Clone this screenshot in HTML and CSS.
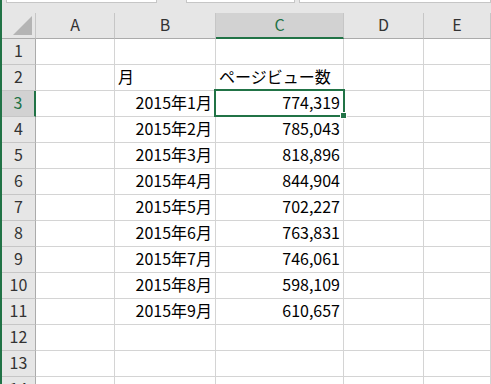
FILE: index.html
```html
<!DOCTYPE html>
<html>
<head>
  <title>Book1 - Excel</title>
  <link rel="stylesheet" href="styles.css">
</head>
<body>
  <div class="window">
    <div class="formula-strip">
      <div class="box name-box"></div>
      <div class="box func-box"></div>
      <div class="box formula-box"></div>
    </div>
    <div class="sheet">
      <div class="head corner"><span class="triangle"></span></div>
      <div class="head col">A</div>
      <div class="head col">B</div>
      <div class="head col active-col">C</div>
      <div class="head col">D</div>
      <div class="head col">E</div>

      <div class="head row">1</div>
      <div class="cell"></div><div class="cell"></div><div class="cell"></div><div class="cell"></div><div class="cell"></div>

      <div class="head row">2</div>
      <div class="cell"></div><div class="cell">月</div><div class="cell">ページビュー数</div><div class="cell"></div><div class="cell"></div>

      <div class="head row active-row">3</div>
      <div class="cell"></div><div class="cell num">2015年1月</div><div class="cell num selected">774,319</div><div class="cell"></div><div class="cell"></div>

      <div class="head row">4</div>
      <div class="cell"></div><div class="cell num">2015年2月</div><div class="cell num">785,043</div><div class="cell"></div><div class="cell"></div>

      <div class="head row">5</div>
      <div class="cell"></div><div class="cell num">2015年3月</div><div class="cell num">818,896</div><div class="cell"></div><div class="cell"></div>

      <div class="head row">6</div>
      <div class="cell"></div><div class="cell num">2015年4月</div><div class="cell num">844,904</div><div class="cell"></div><div class="cell"></div>

      <div class="head row">7</div>
      <div class="cell"></div><div class="cell num">2015年5月</div><div class="cell num">702,227</div><div class="cell"></div><div class="cell"></div>

      <div class="head row">8</div>
      <div class="cell"></div><div class="cell num">2015年6月</div><div class="cell num">763,831</div><div class="cell"></div><div class="cell"></div>

      <div class="head row">9</div>
      <div class="cell"></div><div class="cell num">2015年7月</div><div class="cell num">746,061</div><div class="cell"></div><div class="cell"></div>

      <div class="head row">10</div>
      <div class="cell"></div><div class="cell num">2015年8月</div><div class="cell num">598,109</div><div class="cell"></div><div class="cell"></div>

      <div class="head row">11</div>
      <div class="cell"></div><div class="cell num">2015年9月</div><div class="cell num">610,657</div><div class="cell"></div><div class="cell"></div>

      <div class="head row">12</div>
      <div class="cell"></div><div class="cell"></div><div class="cell"></div><div class="cell"></div><div class="cell"></div>

      <div class="head row">13</div>
      <div class="cell"></div><div class="cell"></div><div class="cell"></div><div class="cell"></div><div class="cell"></div>

      <div class="head row">14</div>
      <div class="cell"></div><div class="cell"></div><div class="cell"></div><div class="cell"></div><div class="cell"></div>
    </div>
  </div>
</body>
</html>
```

FILE: styles.css
```css
body {
  margin: 0;
  padding: 0;
  overflow: hidden;
}
.window {
  width: 491px;
  height: 384px;
  box-sizing: border-box;
  border-left: 2px solid #217346;
  background: #e6e6e6;
  overflow: hidden;
  font-family: "Noto Sans CJK JP", "Liberation Sans", sans-serif;
  font-size: 16px;
  line-height: 1.2;
}
.formula-strip {
  display: flex;
  height: 13px;
}
.box {
  height: 2px;
  background: white;
  border: 1px solid #c6c6c6;
  border-top: none;
}
.name-box {
  margin-left: 4px;
  width: 149px;
}
.func-box {
  margin-left: 29px;
  width: 107px;
}
.formula-box {
  margin-left: 4px;
  flex: 1;
}
.sheet {
  display: grid;
  grid-template-columns: 34px 79px 101px 128px 80px 1fr;
  grid-auto-rows: 26px;
}
.head {
  box-sizing: border-box;
  background: #e6e6e6;
  color: #333;
  display: flex;
  align-items: center;
  justify-content: center;
  padding-bottom: 1px;
}
.col {
  border-right: 1px solid #c6c6c6;
  border-bottom: 1px solid #ababab;
}
.row {
  border-right: 1px solid #ababab;
  border-bottom: 1px solid #c6c6c6;
}
.corner {
  position: relative;
  border-right: 1px solid #c6c6c6;
  border-bottom: 1px solid #ababab;
}
.triangle {
  position: absolute;
  right: 3px;
  bottom: 3px;
  width: 0;
  height: 0;
  border-left: 19px solid transparent;
  border-bottom: 19px solid #b4b4b4;
}
.active-col {
  background: #d2d2d2;
  color: #217346;
  border-bottom: 2px solid #217346;
}
.active-row {
  background: #d2d2d2;
  color: #217346;
  border-right: 2px solid #217346;
}
.cell {
  box-sizing: border-box;
  background: white;
  color: black;
  border-right: 1px solid #d4d4d4;
  border-bottom: 1px solid #d4d4d4;
  padding: 0 3px 2px;
  display: flex;
  align-items: center;
  white-space: nowrap;
}
.num {
  justify-content: flex-end;
}
.selected {
  position: relative;
}
.selected::before {
  content: "";
  position: absolute;
  top: -2px;
  left: -2px;
  right: -2px;
  bottom: -1px;
  border: 2px solid #217346;
}
.selected::after {
  content: "";
  position: absolute;
  right: -4px;
  bottom: -3px;
  width: 5px;
  height: 5px;
  background: #217346;
  border: 1px solid white;
}
```
